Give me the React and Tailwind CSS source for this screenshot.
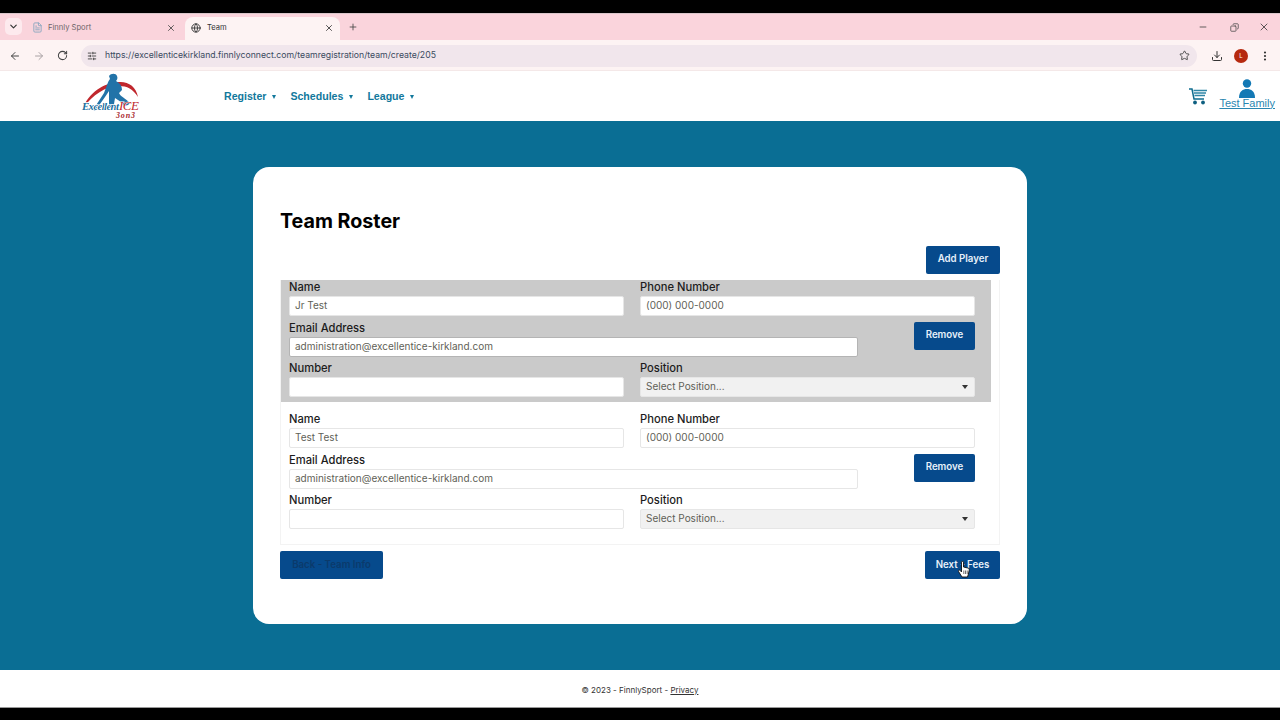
import React from 'react'
import {
  ChevronDown, X, Plus, ArrowLeft, ArrowRight, RotateCw, SlidersHorizontal,
  Star, Download, EllipsisVertical, Minus, Globe, Copy, FileText,
} from 'lucide-react'

const font = "font-['Inter','Liberation_Sans',sans-serif]"

const Logo = () => (
  <svg width="60" height="46" viewBox="0 0 60 46" className="ml-[81px]">
    <path d="M2 35 C8 20 22 10 37 9 C47 8 55 13 57 24 C52 16 46 13 38 13 C24 13 12 22 2 35 Z" fill="#c0272d" />
    <path d="M28 3 C30 0 35 0 36 3 C37 5 36 7 35 8 C39 10 41 13 41 17 L38 20 C39 23 44 25 49 30 L47 32 L43 33 L40 29 L34 25 L33 31 L35 35 L28 35 L28 27 L28 18 L24 24 L14 38 L12 37 L23 20 L26 12 C27 9 28 7 29 6 Z" fill="#2273a8" />
    <text x="1" y="37" fontFamily="Liberation Serif, serif" fontStyle="italic" fontWeight="700" fontSize="11" fill="#1c6f9e" stroke="#fff" strokeWidth="1.5" paintOrder="stroke" textLength="37">Excellent</text>
    <text x="38" y="37" fontFamily="Liberation Serif, serif" fontStyle="italic" fontSize="13" fill="#c0272d" stroke="#fff" strokeWidth="1" paintOrder="stroke" textLength="20">ICE</text>
    <text x="35" y="45" fontFamily="Liberation Serif, serif" fontStyle="italic" fontWeight="700" fontSize="8" fill="#a8262c" textLength="19">3on3</text>
  </svg>
)

const Cart = () => (
  <svg width="18" height="17" viewBox="0 0 18 17" fill="none">
    <path d="M0 1 H3 L5 11 H15" stroke="#0e6c8e" strokeWidth="1.5" />
    <path d="M4.5 2.5 H18 M5 5 H17 M5.5 7.5 H16" stroke="#2f86a6" strokeWidth="1.3" />
    <circle cx="6" cy="14.5" r="1.9" fill="#0e5f80" />
    <circle cx="14" cy="14.5" r="1.9" fill="#0e5f80" />
  </svg>
)

const Person = () => (
  <svg width="18" height="19" viewBox="0 0 18 19">
    <circle cx="9" cy="4.5" r="4.2" fill="#1379b5" />
    <path d="M1 19 C1 12 5 10 9 10 C13 10 17 12 17 19 Z" fill="#1379b5" />
  </svg>
)

const Hand = () => (
  <svg width="12" height="17" viewBox="0 0 12 17" className="absolute left-[33px] top-[10px]">
    <path d="M3.5 1.2 C3.5 0 5.5 0 5.5 1.2 V6 L9.8 7 C11 7.3 11.4 8 11.2 9.2 L10.4 13 L9.5 16 H4 L0.6 10.6 C0 9.5 1.4 8.5 2.3 9.5 L3.5 11 Z" fill="#fff" stroke="#111" strokeWidth="0.9" />
    <path d="M5.8 9.5 V13 M7.5 9.5 V13 M9.2 9.5 V13" stroke="#111" strokeWidth="0.6" />
  </svg>
)

const Field = ({ label, value, placeholder, className, strong }) => (
  <div className={className}>
    <div className="h-[14px] mb-[2px] text-[11.2px] leading-[14px] font-medium text-[#1c1c1c]">{label}</div>
    <div className={`h-[20px] bg-white rounded-[2px] border px-[5px] text-[10px] leading-[16px] text-[#5f5f57] ${strong ? 'border-[#b4b4b4]' : 'border-[#e6e6e6]'}`}>
      {value || placeholder}
    </div>
  </div>
)

const SelectBox = ({ className }) => (
  <div className={className}>
    <div className="h-[14px] mb-[2px] text-[11.2px] leading-[14px] font-medium text-[#1c1c1c]">Position</div>
    <div className="h-[20px] flex items-center justify-between bg-[#f1f1f1] rounded-[2px] border border-[#e6e6e6] pl-[5px] pr-[6px] pb-[1px] text-[10px] text-[#5f5f57]">
      <span>Select Position...</span>
      <span className="w-0 h-0 border-x-[3px] border-x-transparent border-t-[4px] border-t-[#333]"></span>
    </div>
  </div>
)

const Btn = ({ children, className }) => (
  <div className={`flex items-center justify-center h-[28px] bg-[#064a8c] rounded-[2px] text-[9.7px] font-semibold ${className}`}>
    {children}
  </div>
)

const PlayerRow = ({ name, shaded }) => (
  <div className={`flex flex-col gap-[4.5px] mr-[8px] pl-[8px] pr-[16px] pb-[5px] ${shaded ? 'bg-[#cacaca]' : ''}`}>
    <div className="flex gap-[16px]">
      <Field label="Name" value={name} className="w-[335px]" />
      <Field label="Phone Number" placeholder="(000) 000-0000" className="w-[335px]" />
    </div>
    <div className="flex items-center justify-between">
      <Field label="Email Address" value="administration@excellentice-kirkland.com" className="w-[569px]" strong={shaded} />
      <Btn className="w-[61px] mt-[-5px] pb-[1px] text-[#e6f0fa]">Remove</Btn>
    </div>
    <div className="flex gap-[16px]">
      <Field label="Number" className="w-[335px]" />
      <SelectBox className="w-[335px]" />
    </div>
  </div>
)

const App = () => {
  return (
    <div className={`w-[1280px] h-[720px] flex flex-col overflow-hidden bg-black ${font}`}>
      <div className="h-[13px] bg-black"></div>

      {/* browser tabs */}
      <div className="h-[27px] flex items-end bg-[#fad4dc] pl-[5px] border-t border-[#d9c6ca]">
        <div className="w-[17px] h-[17px] mb-[5px] flex items-center justify-center rounded-[5px] bg-[#fdeaee]">
          <ChevronDown size={11} strokeWidth={2.5} color="#333" />
        </div>
        <div className="w-[163px] h-[23px] flex items-center pl-[10px] pr-[9px] pb-[2px]">
          <FileText size={11} color="#8aa6c0" />
          <span className="ml-[5px] flex-1 text-[7.6px] text-[#6d6468]">Finnly Sport</span>
          <X size={10} strokeWidth={2} color="#444" />
        </div>
        <div className="w-[155px] h-[23px] flex items-center rounded-t-[8px] bg-[#fdf3f3] pl-[6px] pr-[6px] pb-[2px]">
          <Globe size={10} strokeWidth={2.4} color="#444" />
          <span className="ml-[6px] flex-1 text-[7.6px] text-[#333]">Team</span>
          <X size={10} strokeWidth={2} color="#333" />
        </div>
        <div className="ml-[8px] mb-[8px]">
          <Plus size={10} strokeWidth={2} color="#444" />
        </div>
        <div className="ml-auto flex items-center pr-[10px] mb-[7px]">
          <Minus size={10} color="#444" />
          <Copy size={9} strokeWidth={2} color="#444" className="ml-[22px] -scale-x-100" />
          <X size={12} strokeWidth={1.6} color="#333" className="ml-[19px]" />
        </div>
      </div>

      {/* browser toolbar */}
      <div className="h-[31px] flex items-center bg-[#fdf3f3] border-b border-[#f4e8e8] pl-[9px] pr-[8px] pt-[1px]">
        <ArrowLeft size={12} strokeWidth={2} color="#444" />
        <ArrowRight size={12} strokeWidth={2} color="#a9a2a4" className="ml-[12px]" />
        <RotateCw size={11} strokeWidth={2.2} color="#444" className="ml-[12px]" />
        <div className="ml-[13px] w-[1116px] h-[22px] flex items-center rounded-full bg-[#f1e6ec] pl-[6px] pr-[7px]">
          <SlidersHorizontal size={10} strokeWidth={2.2} color="#444" />
          <span className="ml-[8px] flex-1 text-[8.7px] text-[#3a4a5e]">https://excellenticekirkland.finnlyconnect.com/teamregistration/team/create/205</span>
          <Star size={11} strokeWidth={2} color="#444" />
        </div>
        <Download size={12} strokeWidth={2} color="#333" className="ml-[14px]" />
        <div className="ml-[11px] w-[14px] h-[14px] rounded-full bg-[#b6290f] flex items-center justify-center text-[6px] text-white">L</div>
        <EllipsisVertical size={12} strokeWidth={2.4} color="#333" className="ml-[11px]" />
      </div>

      {/* site header */}
      <div className="h-[50px] flex items-center bg-white">
        <Logo />
        <nav className="ml-[83px] pt-[2px] flex items-center text-[10.6px] font-bold font-['Liberation_Sans'] text-[#12789c]">
          <span>Register</span>
          <span className="ml-[6px] w-0 h-0 border-x-[2.5px] border-x-transparent border-t-[4px] border-t-[#12789c]"></span>
          <span className="ml-[14px]">Schedules</span>
          <span className="ml-[6px] w-0 h-0 border-x-[2.5px] border-x-transparent border-t-[4px] border-t-[#12789c]"></span>
          <span className="ml-[14px]">League</span>
          <span className="ml-[6px] w-0 h-0 border-x-[2.5px] border-x-transparent border-t-[4px] border-t-[#12789c]"></span>
        </nav>
        <div className="ml-auto flex items-center pr-[5px]">
          <Cart />
          <div className="ml-[12px] mb-[6px] flex flex-col items-center">
            <Person />
            <span className="font-['Liberation_Sans'] text-[11px] leading-[10px] underline text-[#2a86b0]">Test Family</span>
          </div>
        </div>
      </div>

      {/* page body */}
      <div className="h-[549px] pt-[46px] bg-[#0a6e94]">
        <div className="w-[774px] h-[457px] mx-auto bg-white rounded-[16px] px-[27px] pt-[42px]">
          <h1 className="text-[19.7px] leading-[24px] font-bold text-black">Team Roster</h1>
          <div className="flex justify-end mt-[13px]">
            <Btn className="w-[74px] pb-[1px] text-[#e6f0fa]">Add Player</Btn>
          </div>
          <div className="mt-[6px] h-[265px] border border-[#f3f3f3] border-t-0 flex flex-col gap-[10px]">
            <PlayerRow name="Jr Test" shaded />
            <PlayerRow name="Test Test" />
          </div>
          <div className="flex justify-between mt-[6px]">
            <Btn className="w-[103px] text-[#0b3a6b]">Back - Team Info</Btn>
            <div className="relative">
              <Btn className="w-[75px] text-[#e6f0fa]">Next - Fees</Btn>
              <Hand />
            </div>
          </div>
        </div>
      </div>

      {/* footer */}
      <div className="h-[37px] flex items-center justify-center bg-white pt-[3px] text-[8px] text-[#333]">
        <span>© 2023 - FinnlySport - <span className="underline">Privacy</span></span>
      </div>
      <div className="h-[13px] bg-black border-t border-[#999]"></div>
    </div>
  )
}

export default App
